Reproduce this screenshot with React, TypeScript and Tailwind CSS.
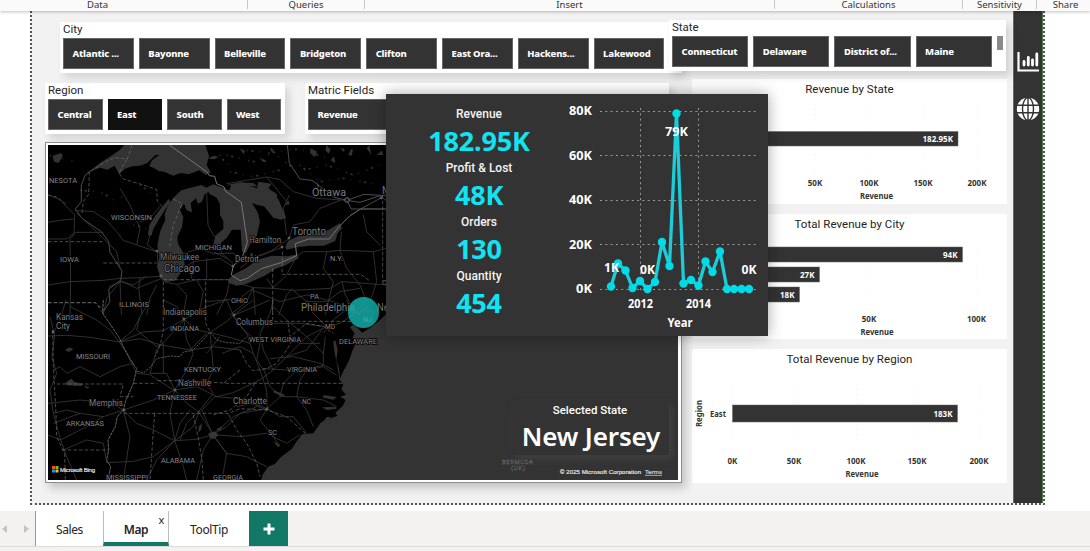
import React from 'react';

const SEGOE = "font-['Noto_Sans','Open_Sans',sans-serif]";
const DIN = "font-['Roboto',sans-serif]";

function Slicer({ title, items, selected, className, itemClass }: { title: string; items: string[]; selected?: string; className: string; itemClass: string }) {
  return (
    <section className={`bg-white pl-[3px] ${className}`}>
      <h3 className={`h-4 text-[11.5px] leading-[14px] text-[#252423] ${DIN}`}>{title}</h3>
      <div className="flex gap-[5px]">
        {items.map((t) => (
          <button
            key={t}
            className={`h-[31px] shrink-0 whitespace-nowrap border pl-[8.5px] pt-[2px] text-left text-[9.5px] font-extrabold tracking-[-0.2px] text-white ${SEGOE} ${itemClass} ${t === selected ? 'border-[#111] bg-[#111]' : 'border-[#666] bg-[#333]'}`}
          >
            {t}
          </button>
        ))}
      </div>
    </section>
  );
}

type Label = [number, number, string, number];

const stateLabels: Label[] = [
  [1, 38, 'NESOTA', 28], [63, 75, 'WISCONSIN', 41], [12, 117, 'IOWA', 19], [147, 105, 'MICHIGAN', 37],
  [71, 162, 'ILLINOIS', 30], [183, 158, 'OHIO', 17], [122, 186, 'INDIANA', 29], [262, 154, 'PA', 9],
  [282, 116, 'N.Y.', 13], [277, 184, 'MD', 10], [201, 197, 'WEST VIRGINIA', 52], [291, 199, 'DELAWARE', 38],
  [28, 214, 'MISSOURI', 34], [136, 227, 'KENTUCKY', 37], [239, 227, 'VIRGINIA', 30], [109, 255, 'TENNESSEE', 40],
  [18, 281, 'ARKANSAS', 38], [254, 259, 'NC', 9], [220, 290, 'SC', 9], [113, 318, 'ALABAMA', 34],
  [58, 334.5, 'MISSISSIPPI', 42], [165, 334.5, 'GEORGIA', 30], [334, 140, 'CONN', 20],
];
const cityLabels: Label[] = [
  [112, 115, 'Milwaukee', 39], [201, 98, 'Hamilton', 32], [187, 117, 'Detroit', 24], [115, 170, 'Indianapolis', 44],
  [188, 180, 'Columbus', 37], [8, 175, 'Kansas', 27], [8, 184, 'City', 14], [130, 241, 'Nashville', 33],
  [41, 261, 'Memphis', 34], [185, 259, 'Charlotte', 34],
];
const bigLabels: Label[] = [
  [264, 51, 'Ottawa', 34], [244, 90, 'Toronto', 34], [116, 127, 'Chicago', 36], [253, 166, 'Philadelphia', 54],
  [329, 166, 'New York', 40], [334, 49, 'Montréal', 40],
];

function MapLabels({ items, size, fill }: { items: Label[]; size: number; fill: string }) {
  return (
    <g fontSize={size} fill={fill} stroke="#000" strokeWidth="1.4" paintOrder="stroke" strokeLinejoin="round">
      {items.map(([x, y, t, w]) => (
        <text key={t} x={x} y={y} textLength={w} lengthAdjust="spacingAndGlyphs">{t}</text>
      ))}
    </g>
  );
}

function MapView() {
  return (
    <svg className="block" width="630" height="335" viewBox="0 0 630 335" fontFamily="Roboto, sans-serif">
      <rect width="630" height="335" fill="#333" />
      {/* land mass */}
      <g transform="translate(-8 155) scale(.33333)">
        <path fill="#000" d="M0-480H1300V-20L1060 20 1018 62 990 84 966 98 957 88 940 74 930 82 944 100 938 112 950 124 938 150 926 184 907 220 900 236 897 205 889 180 893 150 886 120 880 126 884 160 892 198 898 238 910 254 904 268 918 284 900 290 917 300 908 318 886 338 892 348 856 360 842 368 820 400 786 403 766 430 756 446 724 470 704 492 684 500 668 524 662 545H0z" />
        <g fill="#333">
          <path d="M75 150l15-8 10 6-14 8zM76 248l18-12 10 10 26 6-6 6-44-2zM130 256l18 6-6 4zM476 380l10-10-2 18-8 10zM505 400l20-6 10 12-14 12-12-4zM528 388l22-10-10 14zM700 424l20 10-6 8zM850 365l10-14 14 0-16 12zM850 285l40 6-10 8-30-6zM846 322l40-2 4 6-30 4zM700 270l34 14-2 6-30-12z" />
        </g>
      </g>
      {/* lakes */}
      <g transform="translate(-8 -10) scale(.33333)">
        <g fill="#333">
          <path d="M148 110L180 84 214 62 240 44 252 30H496L507 62 500 90 512 112 498 120 478 106 446 118 422 114 400 122 372 110 356 108 340 98 328 94 336 76 358 60 346 60 322 84 300 92 276 94 254 102 238 118 224 92 202 104 180 98z" />
          <path d="M384 212L400 188 424 166 452 158 484 150 512 164 494 178 486 200 474 206 468 190 452 204 456 232 440 226 432 206 420 224 430 246 426 276 412 306 414 326 430 354 434 390 418 420 404 438 376 440 360 424 352 396 358 364 352 332 360 290 376 254 374 236z" />
          <path d="M324 300l4-30 18-28 18-24 22-26 6 8-22 32-16 26-14 24-6 20z" />
          <path d="M496 160l24-12 28 10 20 8 6-16 46 0 32 10 24-2 20 12 20 24 10 24 12 30-14 6-24-6-28-34-20-4-16-6 18 30 6 26-10 44-22 28-10 22-12-4-4-66-26 0-16 24-24 22-16 0 6-28 24-20 0-24-10-18 0-32-10-20-20-10z" />
          <path d="M564 434l18-16 36-18 34-26 44-12 46 2 30-6 4 12-38 20-32 12-32 20-54 24-30 6-24-8z" />
          <path d="M736 336l8-18 30-14 56-8 34-10 36-22 6 16-14 16-6 22-34 14-42 0-36 4-34 8z" />
          <path d="M630 356l8-2 2 12-8 2zM400 30h50l20 16-36 4z" />
          <path d="M500 60l10 8 10-6 16 4-12 6-14 0zM560 150l40-8 40 2 12 10-50 0zM655 140l40 6-10 14 26 18 0 10-30-20-30-8zM860 30l12 14-6 12-10-10zM812 40l20 10-8 16-14-12zM900 38l14 4-2 10zM830 140l8 14-6 6zM872 76l10-12 4 20zM38 62l26-8 4 10-12 20-14-4zM250 34l30-4 20 6-24 4zM925 60l8-18 6 2-4 18zM980 40l8-10 6 30zM660 70l14 4 6 8-12-2zM735 210l10-14 4 12zM600 40l16 8-6 10zM1010 60l16-14 4 14zM690 38l12 6-8 6z" />
        </g>
        <path fill="none" stroke="#303030" strokeWidth="5" strokeDasharray="3 11 7 18 2 25" d="M560 60l80 20 60-30 70 60 90-20 80 30 80-30M570 110l70 15 80-20M620 46l70 8 88-12 80 26M780 90l60 50 70-10 110 20M30 62l70 16M120 166l60 4 40 24 30-10M300 150l40 30M280 270l34 6 20 22M540 60l20 30 20-20" />
        {/* international border */}
        <g fill="none" stroke="#777" strokeWidth="3">
          <path d="M388 30L502 112 508 122 524 124 530 146 552 156 556 168 604 202 622 322 606 370 580 392 574 420 600 437 622 430 664 401 720 384 770 362 766 326 806 312 868 312 896 276 930 242 962 222H1040" />
        </g>
        <g fill="none" stroke="#5b5b5b" strokeWidth="2.5">
          <path d="M152 108L136 120 124 150 124 200 106 222 126 250 184 290 206 320 210 352 246 408 242 436 206 462 210 500 190 530" />
          <path d="M742 30L748 84 780 132 816 136 848 160 880 186 920 196 972 178 1038 182M920 196L934 222 962 222 1024 188 1038 170M920 196l40 6 60-20 20 16" />
        </g>
        <g fill="none" stroke="#707070" strokeWidth="2" strokeDasharray="11 6">
          <path d="M152 108L190 84 224 68 262 72 276 30M238 112L262 70M238 116L250 132 310 150 350 164 352 200 366 214M126 234L130 200 146 178 148 110M24 320H192M190 384H350M24 503H166L190 535M400 192L426 206 400 270 388 340M370 440V540M370 434H566M497 440V540M728 350L726 418H962L990 438M698 400V540M1028 180V440M24 180L50 186 76 206" />
        </g>
        {/* highways */}
        <g fill="none" stroke="#3e3e3e" strokeWidth="2.3">
          <path d="M24 312H80L106 292 190 292M24 180L60 194 86 222 104 240 102 300 90 310 92 440 90 540M24 450L90 440 190 436 240 430 300 428 362 424M104 226L160 230 200 256 230 290 250 316 290 330 350 350M110 234L140 262 200 320 230 350 240 400M290 330L300 280 270 210 240 160M352 350L354 400 370 440 410 448 470 434 570 434 600 446 640 458 700 460 760 466 870 460 906 440 1038 450" />
          <path d="M240 436L290 460 340 440 366 430M206 456L240 440 280 450 320 424M240 436L244 540M300 428L296 460 306 540M350 450L330 490 320 540M410 448L440 480 430 540M470 434L490 470 480 520M500 170L504 270 520 300 540 320 544 354 580 386M430 356L480 340 520 356 580 354 600 378M430 400L460 380 540 370 580 396M460 380L454 430M500 370V434M520 350L560 370M600 400L640 368 730 336M740 300L730 220 748 180M748 310L760 270 810 260 840 220 900 196M748 310L720 330 690 350 640 370M560 146L620 136 680 126 720 134 760 170 830 190 920 196M680 126L700 150 740 200M640 458L620 500 570 540M640 458L646 540M570 434L560 480 530 540M640 458L600 490 500 500M700 460L680 430M770 364L790 350H860L900 346 1000 350 1040 340M770 364L750 400 740 420 698 460M900 346L904 290M860 350L850 400 880 440 870 480 856 540M970 240L980 290 1020 330M900 346L920 400 960 450 980 500M640 466L720 500 800 480 880 500 930 520M716 540L740 480 758 460M24 262L60 256 100 252M330 300L322 330 350 350M360 214L330 250 300 260M190 540L200 490 240 440M1000 350L1010 440 990 500M906 440L916 480 940 520M760 466L800 500 860 500 900 470 960 460" />
        </g>
      </g>
      <g transform="translate(-8 155) scale(.33333)" fill="none">
        <g stroke="#3e3e3e" strokeWidth="2.3">
          <path d="M24 108L80 106 150 112 238 126 300 116 360 134 450 150 500 100M40 100L60 60 78 0M44 106L30 50M44 106L36 170 50 220 30 270 40 340 62 420M238 126L210 90 170 60 90 20M238 126L280 90 300 50 330 0M238 126L310 96 370 92 432 58M238 126L260 160 290 220 330 224 400 270M432 58L410 20 370 0M432 58L470 90 510 98 560 64 580 46 640 0M432 58L500 20 560 0M432 58L440 120 460 160 440 210 404 270M580 46L560 0M580 46L620 30 690 0M580 46L610 90 660 130 650 180 670 210M510 98L516 160 520 210 500 250 520 280 480 330M510 98L560 110 630 130M450 150L520 140 600 150M404 270L340 300 250 330M404 270L380 220 330 220 350 150 432 60M404 270L470 260 530 290 580 278 660 240 700 210 760 150 800 110 860 80M404 270L440 310 476 336 520 404M404 270L390 340 404 422M250 330L190 350 120 340 40 370M250 330L290 370 340 390 404 422 430 500 440 540M250 330L216 310 120 300 24 310M250 330L270 410 250 540M40 340L80 330 120 340M62 420L24 405M62 420L80 470 110 540M62 420L140 380 190 350M200 488L280 484 340 470 404 422 470 418 518 404 560 380 600 340 682 326M404 422L350 480 320 540M404 422L420 370 450 330M518 404L490 450 470 540M518 404L560 460 546 540M518 404L560 460 620 470 680 500M518 404L600 410 680 400 740 430 780 404M518 404L486 330 524 290 600 296 680 330M682 326L680 270 660 210 640 160M682 326L720 290 770 290 850 300 890 320M682 326L660 360 700 410 720 440M682 326L720 350 760 350 800 400M682 326L640 310 590 320M770 290L800 330 820 380M770 290L780 240 800 210 850 200 890 226M670 206L740 210 800 206 850 196 850 160 856 110M670 206L690 260 724 290M640 160L620 100 580 50M690 176L760 170 840 190 880 210M700 210L670 150 660 100 690 40 700 0M850 160L800 110 740 60 700 20M850 100L880 60 930 20M860 80L820 40 800 0M860 80L900 70 940 44 920 0M860 80L780 70 700 70M200 488L190 430 140 420 70 450M120 200L180 230 240 200 280 190M120 200L80 220 60 200 40 210M300 50L290 90 350 140 370 130V220M480 330L440 370 420 420M480 330L460 380 404 422M518 404L580 350 650 320M720 290L730 250 770 210M740 110L780 130 840 130M740 170L800 150 846 90M546 160L600 140 640 160M540 110L500 160" />
        </g>
        <g stroke="#626262" strokeWidth="3">
          <path d="M190 0L188 40 236 110 250 140 270 176 290 206 280 250 258 300 250 330 232 350 226 380 204 420 206 450 200 480 212 500 204 540" strokeDasharray="10 2" />
          <path d="M292 214L312 218 332 200 350 176 390 168 420 170 430 156 456 152 480 130 510 96 530 120 560 128 600 130 620 110" strokeDasharray="7 3" strokeWidth="2.5" />
        </g>
        <g stroke="#707070" strokeWidth="2" strokeDasharray="11 6">
          <path d="M24 8H166L190 30M370 0V90L362 130 346 170M497 0V70L510 96M698 0V64H940M744 70L750 110 800 70 850 80 880 100M600 150L620 190 640 212 680 206 710 190 740 150 764 110M600 210L550 250M352 242H460L560 250H912M280 250H350M644 250L620 290 570 330 520 344M250 340H566L600 326 682 330 740 350 800 404M566 344L590 390 620 430 650 490 660 530M460 344L476 420 486 480 490 540M344 340L338 420 330 540M38 90L40 200 48 340 50 410 74 460M50 252H250L240 290H280M66 450H204M74 460L76 540" />
        </g>
      </g>
      <g fill="#111" stroke="#888" strokeWidth=".8">
        <circle cx="299" cy="55" r="2.3" /><circle cx="241" cy="93" r="1" /><circle cx="234" cy="102" r="1" />
        <circle cx="109" cy="106" r="1" /><circle cx="113" cy="131" r="1" /><circle cx="185" cy="121" r="1" />
        <circle cx="333" cy="53" r="1" /><circle cx="136" cy="174" r="1" /><circle cx="186" cy="170" r="1" />
        <circle cx="127" cy="245" r="1" /><circle cx="76" cy="265" r="1" /><circle cx="219" cy="264" r="1" /><circle cx="5" cy="187" r="1" />
      </g>
      <MapLabels items={stateLabels} size={7.3} fill="#858585" />
      <MapLabels items={cityLabels} size={8.5} fill="#7c7c7c" />
      <MapLabels items={bigLabels} size={10.5} fill="#7c7c7c" />
      <circle cx="315.5" cy="167.5" r="15.5" fill="#14b8b4" fillOpacity=".8" />
      <path d="M303 165l8 4 6-6 5 4" stroke="#3f8f8d" fill="none" />
      <text x="315" y="177" fontSize="7" fill="#4fa5a3">NJ</text>
      <g fontSize="6" fill="#1c1c1c" stroke="#777" strokeWidth=".3">
        <text x="454" y="319" textLength="31">BERMUDA</text><text x="463" y="324.5" textLength="14">(UK)</text>
      </g>
      <path fill="#f35325" d="M4 321h3v3H4z" /><path fill="#81bc06" d="M7.500 321h3v3h-3z" />
      <path fill="#05a6f0" d="M4 324.500h3v3H4z" /><path fill="#ffba08" d="M7.500 324.500h3v3h-3z" />
      <g fontSize="6" fontFamily="Liberation Sans, sans-serif" fill="#f3f3f3" stroke="#ddd" strokeWidth=".2">
        <text x="12" y="327" textLength="35">Microsoft Bing</text>
        <text x="512" y="329" textLength="81">© 2025 Microsoft Corporation</text>
        <text x="597" y="329" textLength="17" fill="#b9c9f5" textDecoration="underline">Terms</text>
      </g>
    </svg>
  );
}

const points: [number, number][] = [
  [611, 286.5], [618, 263.500], [625.500, 270.500], [632.500, 288], [640, 281], [647.500, 289], [655, 282], [662, 242],
  [669.500, 266], [676.500, 113.500], [683.500, 283.500], [691, 280], [698.500, 285.500], [705.500, 261.500], [712.500, 272],
  [720, 251.500], [727, 289], [734, 289], [741.500, 289], [749, 289],
];

function TrendChart() {
  return (
    <svg width="208" height="242" viewBox="560 94 208 242" fontFamily="Noto Sans, Open Sans, sans-serif" fontWeight="700" fontSize="12" fill="#fff">
      <g stroke="#999" strokeDasharray="2 3.300">
        {[111.5, 155.5, 200.5, 244.5, 289.5].map((y) => <path key={y} d={`M600 ${y}H758`} />)}
        <path d="M640.500 108V292M698.500 108V292" />
      </g>
      <polyline points={points.map((p) => p.join(',')).join(' ')} fill="none" stroke="#1bcdd8" strokeWidth="3.3" strokeLinejoin="round" />
      {points.map(([x, y]) => <circle key={x} cx={x} cy={y} r="4.2" fill="#00dbe8" />)}
      {['80K', '60K', '40K', '20K', '0K'].map((t, i) => (
        <text key={t} x="592" y={115 + i * 44.6} textAnchor="end" textLength={t === '0K' ? 16 : 23} lengthAdjust="spacingAndGlyphs">{t}</text>
      ))}
      <g>
        <text x="604" y="272" textLength="15" lengthAdjust="spacingAndGlyphs">1K</text>
        <text x="640" y="274" textLength="15" lengthAdjust="spacingAndGlyphs">0K</text>
        <text x="741.5" y="274" textLength="15" lengthAdjust="spacingAndGlyphs">0K</text>
        <text x="665" y="136" textLength="23" lengthAdjust="spacingAndGlyphs">79K</text>
      </g>
      <text x="628" y="308" textLength="25" lengthAdjust="spacingAndGlyphs" fontSize="11.500">2012</text>
      <text x="686" y="308" textLength="25" lengthAdjust="spacingAndGlyphs" fontSize="11.500">2014</text>
      <text x="667.500" y="327" textLength="25" lengthAdjust="spacingAndGlyphs">Year</text>
    </svg>
  );
}

function Kpi({ label, value }: { label: string; value: string }) {
  return (
    <div className="flex h-[54px] flex-col items-center">
      <span className={`text-[12px] font-medium leading-[14px] text-[#f3f3f3] ${DIN}`}>{label}</span>
      <span className={`mt-px text-[27px] font-bold leading-[37px] tracking-[-0.2px] text-[#12e3f3] ${SEGOE}`}>{value}</span>
    </div>
  );
}

type Bar = { y: number; h: number; end: number; label: string };

function BarCard({ title, top, height, bars, ticks, start, axisX, axisY, category }: {
  title: string; top: number; height: number; bars: Bar[]; ticks: [number, string][]; start: number; axisX: number; axisY: number; category?: boolean;
}) {
  const H = height - 20;
  return (
    <section className="bg-white">
      <h3 className={`h-5 pt-[3px] text-center text-[11.5px] leading-[14px] tracking-[0.05px] text-[#252423] ${DIN}`}>{title}</h3>
      <svg className="block" width="315" height={H} viewBox={`692 ${top + 20} 315 ${H}`} fontFamily="Noto Sans, Open Sans, sans-serif" fontWeight="700" fontSize="8" fill="#333">
        {ticks.map(([x]) => <path key={x} d={`M${x + 0.5} ${top + 25}V${axisY - 16}`} stroke="#f4f4f4" strokeDasharray="1 4" />)}
        {bars.map((b) => (
          <g key={b.label}>
            <rect x={start} y={b.y} width={b.end - start} height={b.h} fill="#333" stroke="#666" strokeWidth=".5" />
            <text x={b.end - 5} y={b.y + b.h / 2 + 3} textAnchor="end" fill="#fff">{b.label}</text>
          </g>
        ))}
        {ticks.map(([x, t]) => <text key={t} x={x} y={axisY - 10.500} textAnchor="middle">{t}</text>)}
        <text x={axisX} y={axisY + 2.500} textAnchor="middle" textLength="33" lengthAdjust="spacingAndGlyphs">Revenue</text>
        {category && <text x="710" y="417" textLength="16" lengthAdjust="spacingAndGlyphs">East</text>}
        {category && <text transform="translate(702 427) rotate(-90)" textLength="27" lengthAdjust="spacingAndGlyphs">Region</text>}
      </svg>
    </section>
  );
}

const ribbon: [string, string][] = [
  ['Data', 'w-[248px] pr-[52px]'], ['Queries', 'w-[117px]'], ['Insert', 'w-[410px]'], ['Calculations', 'w-[188px]'],
  ['Sensitivity', 'w-[74px]'], ['Share', 'w-[53px] pl-1'],
];

export default function App() {
  return (
    <div className={`relative flex h-[551px] w-[1090px] flex-col overflow-hidden bg-white ${SEGOE}`}>
      <header className="relative z-10 flex h-[11px] shrink-0 bg-[#fafafa] shadow-[0_1px_3px_rgba(0,0,0,0.25)]">
        {ribbon.map(([t, c], i) => (
          <div key={t} className={`flex h-[9px] shrink-0 items-center justify-center text-[9.5px] leading-none text-[#333] ${c} ${i < 5 ? 'border-r border-[#c8c8c8]' : ''}`}>{t}</div>
        ))}
      </header>

      <div className="flex h-[500px] shrink-0 pl-[30px]">
        <main className="flex h-[494px] w-[1015px] border-2 border-t-0 border-dotted border-[#555] bg-[#f2f2f2]">
          <div className="w-[981px] pt-[9px]">
            <div className="flex h-[51px] pl-7">
              <Slicer title="City" className="mt-0.5 h-[51px] w-[622px] shadow-[4px_5px_8px_rgba(0,0,0,0.13)]" itemClass="w-[70.8px]"
                items={['Atlantic ...', 'Bayonne', 'Belleville', 'Bridgeton', 'Clifton', 'East Ora...', 'Hackens...', 'Lakewood']} />
              <div className="relative -ml-[13px] flex h-[51px] w-[337px] bg-white shadow-[4px_5px_8px_rgba(0,0,0,0.15)]">
                <Slicer title="State" className="w-[325px]" itemClass="w-[76.2px]" items={['Connecticut', 'Delaware', 'District of...', 'Maine']} />
                <div className="ml-[3px] mt-4 h-[14px] w-[6px] bg-[#8a8a8a]" />
              </div>
            </div>
            <div className="flex gap-[10px] pl-[13px]">
              <div className="w-[637px] pt-3">
                <div className="flex gap-5">
                  <Slicer title="Region" className="h-[51px] w-[240px] shadow-[4px_5px_8px_rgba(0,0,0,0.13)]" itemClass="w-[54.5px]" selected="East" items={['Central', 'East', 'South', 'West']} />
                  <Slicer title="Matric Fields" className="h-[51px] w-[364px] shadow-[4px_5px_8px_rgba(0,0,0,0.13)]" itemClass="w-[175px]" items={['Revenue', 'Profit']} />
                </div>
                <div className="relative mt-2 h-[341px] w-[637px] border border-[#8c8c8c] bg-white p-[2px] shadow-[4px_5px_9px_rgba(0,0,0,0.2)]">
                  <MapView />
                  <div className="absolute bottom-[27px] right-3 flex h-[54px] w-[158px] flex-col items-center bg-[#333] shadow-[4px_4px_7px_rgba(90,90,90,0.35)]">
                    <span className={`pt-[2px] text-[11.5px] font-medium leading-[14px] text-white ${DIN}`}>Selected State</span>
                    <span className="pl-[2px] text-[26px] font-semibold leading-[38px] tracking-[-0.15px] text-white">New Jersey</span>
                  </div>
                </div>
              </div>
              <div className="flex w-[315px] flex-col gap-[9.5px] pt-2">
                <BarCard title="Revenue by State" top={79} height={125} start={740} axisX={876.5} axisY={196.5}
                  bars={[{ y: 131.5, h: 14.5, end: 958, label: '182.95K' }]} ticks={[[815, '50K'], [869, '100K'], [923, '150K'], [977, '200K']]} />
                <BarCard title="Total Revenue by City" top={213.5} height={125.5} start={740} axisX={877} axisY={331.5}
                  bars={[{ y: 246.5, h: 15, end: 962.5, label: '94K' }, { y: 266.5, h: 15, end: 819.5, label: '27K' }, { y: 286.5, h: 15, end: 799.5, label: '18K' }]}
                  ticks={[[869, '50K'], [976.5, '100K']]} />
                <BarCard title="Total Revenue by Region" top={349} height={134} start={732.5} axisX={862} axisY={474.5} category
                  bars={[{ y: 405, h: 17, end: 957.5, label: '183K' }]} ticks={[[732.5, '0K'], [794, '50K'], [856, '100K'], [917, '150K'], [979, '200K']]} />
              </div>
            </div>
          </div>
          <nav className="flex w-[30px] flex-col items-center gap-[25px] border-x border-[#4d7a49] bg-[#333] pt-[40px]">
            <svg width="22" height="21" viewBox="0 0 22 21" fill="none" stroke="#fff">
              <path d="M1.500 1V19.500H22" strokeWidth="2.200" />
              <path strokeWidth="2.800" strokeLinecap="round" d="M7 10.500V14M11.300 6.500V14M15.500 9V14M19.800 3V14" />
            </svg>
            <svg width="24" height="24" viewBox="0 0 24 24">
              <circle cx="12" cy="12" r="11.200" fill="#fff" />
              <g fill="none" stroke="#333" strokeWidth="1.400"><ellipse cx="12" cy="12" rx="5.500" ry="11.400" /><path d="M12 0V24M0 8.200H24M0 15.800H24" /></g>
            </svg>
          </nav>
        </main>
      </div>

      <footer className="flex h-10 shrink-0 flex-col bg-[#f3f2f1]">
        <div className="flex h-[36px] border-b border-[#dcdad8] text-[12px] text-[#252423]">
          <div className="flex w-[35px] items-center gap-[17px] pl-[2px]">
            <svg width="5" height="8" viewBox="0 0 5 8"><path d="M5 0V8L0 4z" fill="#c4c2c0" /></svg>
            <svg width="5" height="8" viewBox="0 0 5 8"><path d="M0 0V8L5 4z" fill="#c4c2c0" /></svg>
          </div>
          <div className="flex w-[68px] items-center justify-center border-l border-[#999] bg-white pt-[3px] tracking-[-0.4px]">Sales</div>
          <div className="relative flex w-[66px] items-center justify-center border-x border-b-4 border-x-[#bbb] border-b-[#117865] bg-white pt-[7px] font-semibold tracking-[-0.4px]">
            Map
            <span className="absolute right-[4px] top-[2px] text-[11px] font-normal leading-[14px]">x</span>
          </div>
          <div className="flex w-[80px] items-center justify-center bg-white pt-[3px] tracking-[-0.4px]">ToolTip</div>
          <div className="flex w-[39px] items-center justify-center bg-[#117865]">
            <svg width="12" height="12" viewBox="0 0 12 12"><path d="M6 .5V11.500M.5 6H11.500" stroke="#fff" strokeWidth="3" /></svg>
          </div>
        </div>
      </footer>

      <aside className="absolute left-[386px] top-[94px] z-20 flex h-[242px] w-[382px] bg-[#333] shadow-[0_0_14px_rgba(0,0,0,0.35)]">
        <div className="w-[174px] pl-3 pt-[13px]">
          <Kpi label="Revenue" value="182.95K" />
          <Kpi label="Profit & Lost" value="48K" />
          <Kpi label="Orders" value="130" />
          <Kpi label="Quantity" value="454" />
        </div>
        <TrendChart />
      </aside>
    </div>
  );
}
